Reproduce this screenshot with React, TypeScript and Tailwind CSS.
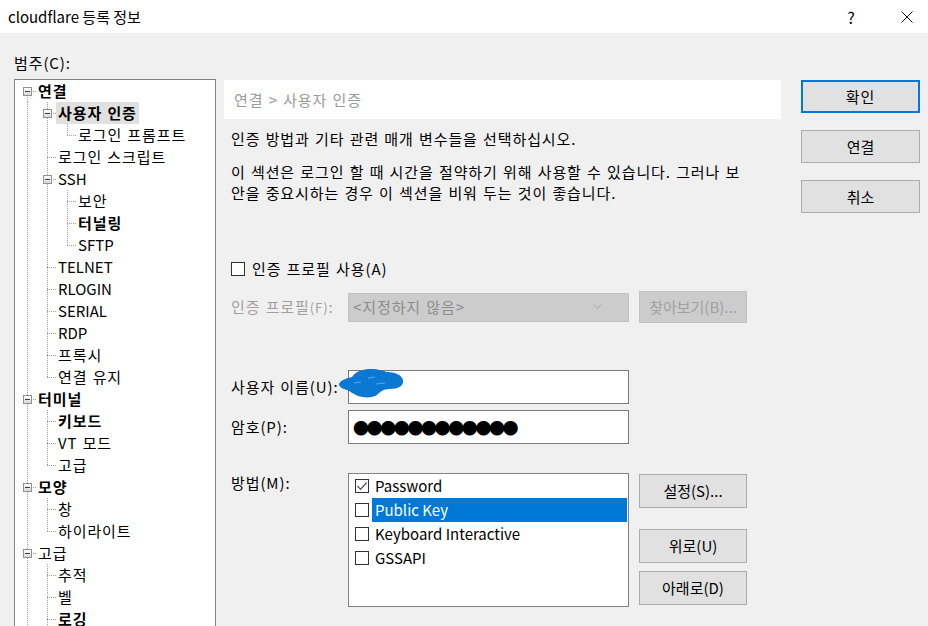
import React from 'react';

type TreeNode = {
  label: string;
  bold?: boolean;
  selected?: boolean;
  open?: boolean; // list goes on below the visible area
  children?: TreeNode[];
};

type Row = {
  node: TreeNode;
  level: number;
  first: boolean;
  last: boolean;
  trail: boolean[]; // does the ancestor at each level have more siblings
};

const tree: TreeNode[] = [
  {
    label: '연결',
    bold: true,
    children: [
      { label: '사용자 인증', bold: true, selected: true, children: [{ label: '로그인 프롬프트' }] },
      { label: '로그인 스크립트' },
      { label: 'SSH', children: [{ label: '보안' }, { label: '터널링', bold: true }, { label: 'SFTP' }] },
      { label: 'TELNET' },
      { label: 'RLOGIN' },
      { label: 'SERIAL' },
      { label: 'RDP' },
      { label: '프록시' },
      { label: '연결 유지' },
    ],
  },
  {
    label: '터미널',
    bold: true,
    children: [{ label: '키보드', bold: true }, { label: 'VT 모드' }, { label: '고급' }],
  },
  { label: '모양', bold: true, children: [{ label: '창' }, { label: '하이라이트' }] },
  {
    label: '고급',
    open: true,
    children: [{ label: '추적' }, { label: '벨' }, { label: '로깅', bold: true }],
  },
];

function flatten(nodes: TreeNode[], level: number, trail: boolean[], open: boolean, out: Row[]) {
  nodes.forEach((node, i) => {
    const last = !open && i === nodes.length - 1;
    out.push({ node, level, first: level === 0 && i === 0, last, trail });
    if (node.children) flatten(node.children, level + 1, [...trail, !last], !!node.open, out);
  });
  return out;
}

const rows = flatten(tree, 0, [], true, []);

const hangul = /[\uac00-\ud7a3]/;

function TreeLines({ row }: { row: Row }) {
  const c = 12 + 20 * row.level;
  const w = 20 * row.level + 21;
  const dot = { stroke: '#a0a0a0', strokeDasharray: '1 1', shapeRendering: 'crispEdges' as const };
  return (
    <svg width={w} height={22} className="shrink-0">
      {row.trail.map((more, a) =>
        more ? <line key={a} x1={12 + 20 * a + 0.5} y1={0} x2={12 + 20 * a + 0.5} y2={22} {...dot} /> : null,
      )}
      <line x1={c + 0.5} y1={row.first ? 11 : 0} x2={c + 0.5} y2={row.last ? 11 : 22} {...dot} />
      <line x1={c} y1={11.5} x2={w} y2={11.5} {...dot} />
      {row.node.children && (
        <g shapeRendering="crispEdges">
          <defs>
            <linearGradient id="exp" x1="0" y1="0" x2="0" y2="1">
              <stop offset="0" stopColor="#ffffff" />
              <stop offset="1" stopColor="#d6d6d6" />
            </linearGradient>
          </defs>
          <rect x={c - 3.5} y={7.5} width={8} height={8} fill="url(#exp)" stroke="#919191" />
          <line x1={c - 2} y1={11.5} x2={c + 3} y2={11.5} stroke="#3c3c3c" />
        </g>
      )}
    </svg>
  );
}

function Checkbox({ checked }: { checked?: boolean }) {
  return (
    <span className="flex h-[14px] w-[14px] shrink-0 items-center justify-center border border-[#333333] bg-white">
      {checked && (
        <svg width="12" height="12" viewBox="0 0 12 12">
          <path d="M1.5 6.2 L4.6 9.3 L10.6 2.6" fill="none" stroke="#333333" strokeWidth="1.1" />
        </svg>
      )}
    </span>
  );
}

function Button({ label, className = '' }: { label: string; className?: string }) {
  return (
    <div
      className={`flex items-center justify-center border border-[#adadad] bg-[#e1e1e1] text-[15px] tracking-normal text-black [word-spacing:0px] ${className}`}
    >
      {label}
    </div>
  );
}

const methods = [
  { label: 'Password', checked: true },
  { label: 'Public Key', selected: true },
  { label: 'Keyboard Interactive' },
  { label: 'GSSAPI' },
];

export default function App() {
  return (
    <div className="h-[626px] w-[928px] overflow-hidden bg-[#f0f0f0] font-['Noto_Sans_CJK_KR',sans-serif] text-[15px] leading-[22px] tracking-[0.9px] text-black [word-spacing:1px]">
      {/* title bar */}
      <div className="flex h-[33px] items-center bg-white pl-[8px] pr-[15px] tracking-normal [word-spacing:0px]">
        <span className="text-[15px]">cloudflare 등록 정보</span>
        <span className="ml-auto w-[20px] text-center text-[16px]">?</span>
        <span className="ml-[40px] flex h-[12px] w-[12px]">
          <svg width="12" height="12" viewBox="0 0 12 12">
            <path d="M0.5 0.5 L11.5 11.5 M11.5 0.5 L0.5 11.5" stroke="#111" strokeWidth="1" />
          </svg>
        </span>
      </div>

      <div className="pl-[14px] pt-[20px]">
        <div className="h-[20px] leading-[20px]">범주(C):</div>

        <div className="mt-[6px] flex">
          {/* category tree */}
          <div className="h-[560px] w-[202px] shrink-0 border border-[#828282] bg-white">
            {rows.map((row, i) => (
              <div key={i} className="flex h-[22px] items-center whitespace-nowrap">
                <TreeLines row={row} />
                <span
                  className={`px-[2px] leading-[22px] ${row.node.bold ? 'font-bold' : ''} ${
                    row.node.selected ? 'bg-[#e0e0e0]' : ''
                  } ${hangul.test(row.node.label) ? '' : 'tracking-normal'}`}
                >
                  {row.node.label}
                </span>
              </div>
            ))}
          </div>

          {/* page */}
          <div className="ml-[8px] w-[557px] shrink-0">
            <div className="mt-px flex h-[39px] items-center bg-white pl-[10px] text-[#9a9a9a]">
              연결 &gt; 사용자 인증
            </div>
            <p className="mt-[9px] pl-[7px] leading-[21px]">인증 방법과 기타 관련 매개 변수들을 선택하십시오.</p>
            <p className="mt-[12px] whitespace-nowrap pl-[7px] leading-[21px]">
              이 섹션은 로그인 할 때 시간을 절약하기 위해 사용할 수 있습니다. 그러나 보
              <br />안을 중요시하는 경우 이 섹션을 비워 두는 것이 좋습니다.
            </p>

            <div className="mt-[55px] flex h-[22px] items-center gap-[7px] pl-[7px]">
              <Checkbox />
              <span>인증 프로필 사용(A)</span>
            </div>

            <div className="mt-[11px] flex h-[32px] items-center pl-[7px]">
              <span className="w-[117px] text-[#a0a0a0]">
                인증 프로필<span className="text-[13px]">(F)</span>:
              </span>
              <div className="flex h-[29px] w-[281px] items-center border border-[#c2c2c2] bg-[#cccccc] pl-[4px] pr-[26px] text-[#8c8c8c]">
                <span className="flex-1">&lt;지정하지 않음&gt;</span>
                <svg width="9" height="6" viewBox="0 0 9 6">
                  <path d="M0.5 0.5 L4.5 4.5 L8.5 0.5" fill="none" stroke="#a8a8a8" />
                </svg>
              </div>
              <div className="ml-[10px] flex h-[32px] w-[108px] items-center justify-center border border-[#c2c2c2] bg-[#cccccc] tracking-normal text-[#a0a0a0]">
                찾아보기(B)...
              </div>
            </div>

            <div className="relative mt-[47px] flex h-[34px] items-center pl-[7px]">
              <span className="w-[117px]">사용자 이름(U):</span>
              <div className="h-[34px] w-[281px] border border-[#7a7a7a] bg-white" />
              {/* redaction scribble over the user name */}
              <svg
                width="66"
                height="30"
                viewBox="0 0 66 30"
                className="absolute left-[114px] top-[-2px] h-[30px] w-[66px]"
              >
                <path
                  d="M1 16 C3 12 9 10 14 9 C18 3 25 1 33 1 C41 1 45 3 49 4 C57 4 64 7 65 12 C66 18 60 21 52 21 C46 21 43 23 39 27 C35 30 26 30 20 28 C15 26 12 23 9 22 C5 21 1 19 1 16 Z"
                  fill="#0b78d4"
                />
                <path d="M16 15 L23 14 M30 10 L37 9 M38 16 L47 15" stroke="#5aa6e6" strokeWidth="1" />
              </svg>
            </div>

            <div className="mt-[6px] flex h-[34px] items-center pl-[7px]">
              <span className="w-[117px]">암호(P):</span>
              <div className="flex h-[34px] w-[281px] items-center border border-[#7a7a7a] bg-white pl-[4px] text-[16px] tracking-[-2.4px]">
                ●●●●●●●●●●●●
              </div>
            </div>

            <div className="mt-[29px] flex pl-[7px]">
              <span className="w-[117px] leading-[20px]">방법(M):</span>
              <div className="h-[134px] w-[281px] border border-[#828282] bg-white tracking-normal [word-spacing:0px]">
                {methods.map((m) => (
                  <div key={m.label} className="flex h-[24px] items-center pl-[6px] pr-px">
                    <Checkbox checked={m.checked} />
                    <span
                      className={`ml-[3px] flex h-[24px] flex-1 items-center pl-[3px] ${
                        m.selected ? 'bg-[#0078d7] text-white' : ''
                      }`}
                    >
                      {m.label}
                    </span>
                  </div>
                ))}
              </div>
              <div className="ml-[10px] flex w-[108px] flex-col">
                <Button label="설정(S)..." className="mt-px h-[34px]" />
                <Button label="위로(U)" className="mt-[21px] h-[34px]" />
                <Button label="아래로(D)" className="mt-[8px] h-[34px]" />
              </div>
            </div>
          </div>

          {/* dialog buttons */}
          <div className="ml-[20px] flex w-[119px] shrink-0 flex-col">
            <div className="mt-px flex h-[33px] items-center justify-center border-2 border-[#0078d7] bg-[#e1e1e1]">
              확인
            </div>
            <Button label="연결" className="mt-[17px] h-[33px]" />
            <Button label="취소" className="mt-[17px] h-[33px]" />
          </div>
        </div>
      </div>
    </div>
  );
}
